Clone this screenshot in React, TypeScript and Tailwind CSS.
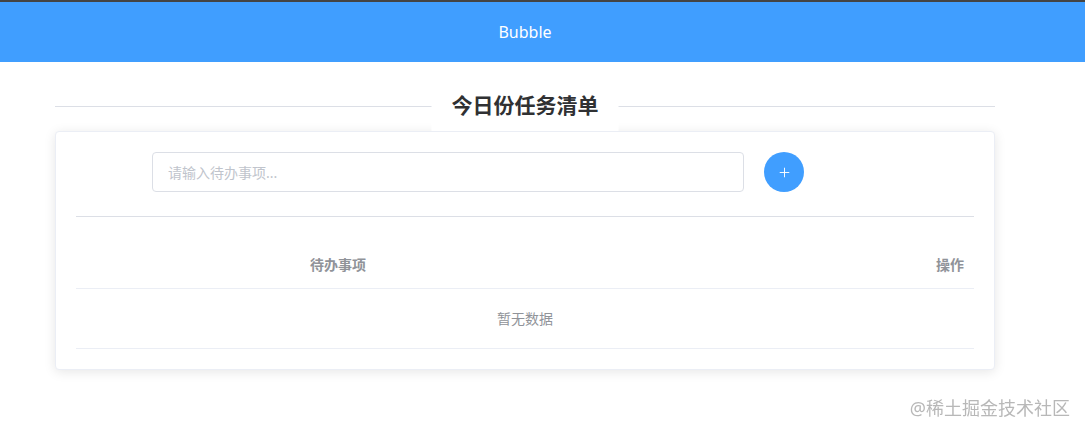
import { Plus } from "lucide-react";

const font = "font-['Noto_Sans','Noto_Sans_CJK_SC',sans-serif]";

export default function App() {
  return (
    <div className={`min-h-[434px] bg-white ${font}`}>
      {/* Header */}
      <div className="border-t-2 border-[#444] bg-[#409eff]">
        <div className="flex h-[60px] w-[1050px] items-center justify-center text-[16px] text-white">
          Bubble
        </div>
      </div>

      <div className="mx-[55px] mt-[24px] w-[940px]">
        {/* Title divider */}
        <div className="relative h-[45px] pt-5">
          <div className="h-px w-full bg-[#dcdfe6]" />
          <div className="absolute left-1/2 top-0 h-[45px] -translate-x-1/2 bg-white px-5 pt-[5px] text-[21px] font-bold leading-7 text-[#303133]">
            今日份任务清单
          </div>
        </div>

        {/* Card */}
        <div className="rounded border border-[#ebeef5] bg-white p-5 shadow-[0_2px_12px_0_rgba(0,0,0,0.1)]">
          <div className="flex items-center">
            <div className="ml-[76px] flex h-10 w-[592px] items-center rounded border border-[#dcdfe6] px-[15px] text-[14px] text-[#c0c4cc]">
              请输入待办事项...
            </div>
            <button
              type="button"
              className="ml-5 flex h-10 w-10 items-center justify-center rounded-full bg-[#409eff] text-white"
            >
              <Plus className="h-[15px] w-[15px]" strokeWidth={1.5} />
            </button>
          </div>

          <div className="mt-6 mb-6 h-px bg-[#dcdfe6]" />

          {/* Table */}
          <div className="text-[14px]">
            <div className="flex h-[48px] items-center border-b border-[#ebeef5] font-bold text-[#909399]">
              <div className="w-[524px] text-center">待办事项</div>
              <div className="flex-1 pr-[10px] text-right">操作</div>
            </div>
            <div className="flex h-[60px] items-center justify-center border-b border-[#ebeef5] text-[#909399]">
              暂无数据
            </div>
          </div>
        </div>
      </div>

      <div className="fixed bottom-[12px] right-[15px] text-[18px] text-[#b8b8b8]">
        @稀土掘金技术社区
      </div>
    </div>
  );
}
